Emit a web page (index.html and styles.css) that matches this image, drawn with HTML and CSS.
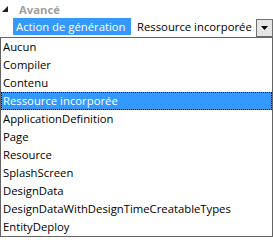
FILE: index.html
```html
<!DOCTYPE html>
<html lang="fr">
<head>
    <meta charset="UTF-8">
    <title>Propriétés</title>
    <link rel="stylesheet" href="styles.css">
</head>
<body>
    <div class="grid">
        <div class="category">
            <svg class="expander" width="7" height="7" viewBox="0 0 7 7">
                <polygon points="6,0 6,6 0,6" fill="#1e1e1e"/>
            </svg>
            <span class="category-name">Avancé</span>
        </div>

        <div class="prop-row">
            <div class="prop-name">Action de génération</div>
            <div class="prop-value">
                <span class="value-text">Ressource incorporée</span>
                <span class="drop-button">
                    <svg width="7" height="4" viewBox="0 0 7 4"><polygon points="0,0 7,0 3.5,4" fill="#000"/></svg>
                </span>
            </div>
        </div>

        <!-- open combo list -->
        <ul class="drop-list">
            <li>Aucun</li>
            <li>Compiler</li>
            <li>Contenu</li>
            <li class="selected">Ressource incorporée</li>
            <li>ApplicationDefinition</li>
            <li>Page</li>
            <li>Resource</li>
            <li>SplashScreen</li>
            <li>DesignData</li>
            <li>DesignDataWithDesignTimeCreatableTypes</li>
            <li>EntityDeploy</li>
        </ul>
    </div>
</body>
</html>
```

FILE: styles.css
```css
:root {
    --select-color: #3399ff;
    --border-color: #646464;
    --muted-color: #a0a0a0;
}

body {
    margin: 0;
    background: #ffffff;
    font-family: "Open Sans", "Noto Sans", sans-serif;
    font-size: 11.3px;
    color: #000000;
}

.grid {
    width: 273px;
}

.category {
    display: flex;
    align-items: center;
    height: 18px;
}

.expander {
    margin-left: 2px;
    margin-right: 10px;
}

.category-name {
    font-weight: bold;
    color: var(--muted-color);
}

.prop-row {
    display: flex;
    height: 18px;
}

.prop-name {
    flex: none;
    width: 115px;
    margin-left: 13px;
    padding-left: 3px;
    background: var(--select-color);
    color: #ffffff;
    line-height: 17px;
    height: 17px;
    white-space: nowrap;
    overflow: hidden;
}

.prop-value {
    flex: 1;
    display: flex;
    align-items: flex-start;
    padding-left: 6px;
    min-width: 0;
}

.value-text {
    flex: 1;
    line-height: 17px;
    white-space: nowrap;
    overflow: hidden;
}

.drop-button {
    flex: none;
    display: flex;
    align-items: center;
    justify-content: center;
    width: 15px;
    height: 16px;
    margin-top: 1px;
    border: 1px solid #707070;
    background: #e5e5e5;
}

.drop-list {
    list-style: none;
    margin: 1px 0 0;
    padding: 0;
    width: 271px;
    border: 1px solid var(--border-color);
}

.drop-list li {
    height: 18px;
    line-height: 18px;
    padding-left: 2px;
    white-space: nowrap;
}

.drop-list li.selected {
    background: var(--select-color);
    color: #ffffff;
    outline: 1px dotted #000000;
    outline-offset: -1px;
}
```
